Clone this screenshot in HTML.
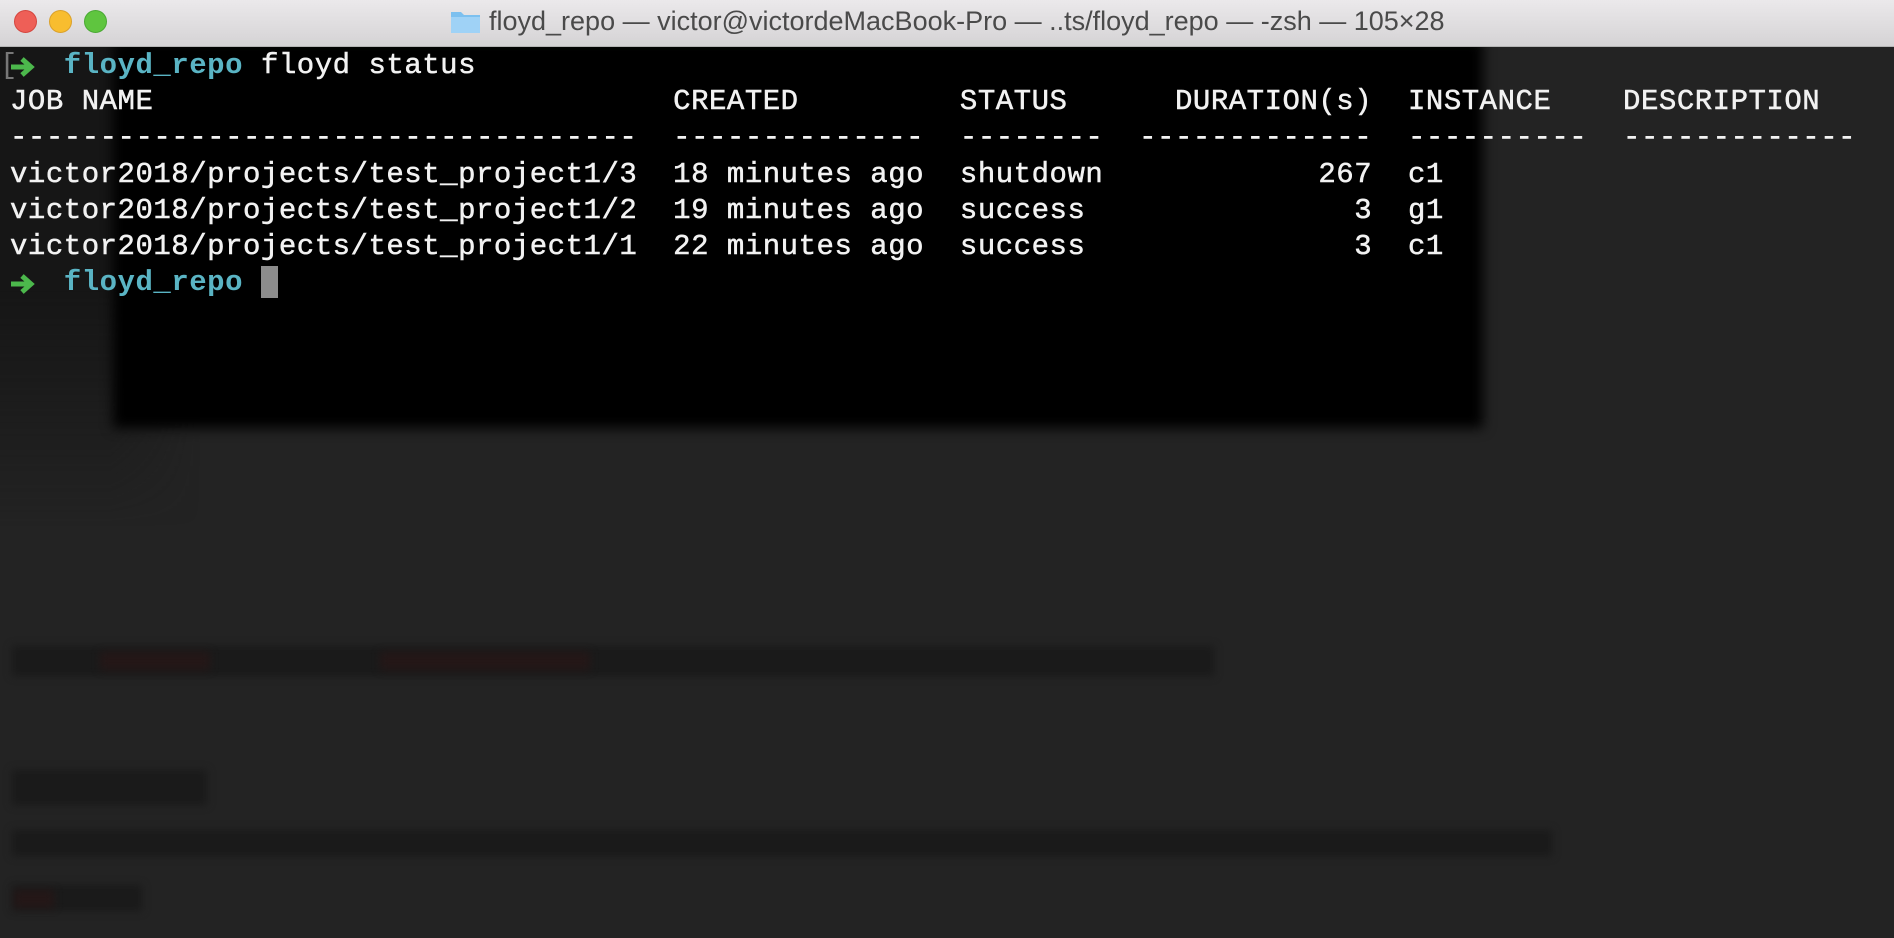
<!DOCTYPE html>
<html><head><meta charset="utf-8"><style>
html,body{margin:0;padding:0;width:1894px;height:938px;overflow:hidden;background:#232323;}
.title{position:absolute;left:0;top:0;width:1894px;height:46px;background:linear-gradient(#ebe9eb,#d5d3d5);border-bottom:1px solid #b5b5b5;}
.dot{position:absolute;top:10px;width:21px;height:21px;border-radius:50%;}
.ttext{position:absolute;left:489px;top:5px;font:27px/32px "Liberation Sans",sans-serif;color:#4a4a4a;white-space:nowrap;}
.blk{position:absolute;left:113px;top:40px;width:1370px;height:388px;background:#000;filter:blur(6px);}
.bgl{position:absolute;left:0;top:46px;width:200px;height:480px;background:linear-gradient(90deg,#161616 0,#161616 110px,rgba(35,35,35,0) 200px);-webkit-mask-image:linear-gradient(#000 50%,transparent);}
.fz{position:absolute;background:#1a1a1a;filter:blur(4px);}
.t{position:absolute;left:10px;font-family:"Liberation Mono","DejaVu Sans Mono",monospace;font-size:29px;letter-spacing:0.52px;color:#f2f2f2;white-space:pre;line-height:36px;-webkit-text-stroke:0.5px currentColor;}
.c{color:#5ab4c4;font-weight:bold;-webkit-text-stroke:0;}
</style></head><body>
<div class="bgl"></div>
<div class="blk"></div>
<div class="fz" style="left:12px;top:646px;width:1202px;height:30px;"></div>
<div class="fz" style="left:100px;top:652px;width:110px;height:18px;background:#241717"></div>
<div class="fz" style="left:380px;top:652px;width:210px;height:18px;background:#241717"></div>
<div class="fz" style="left:12px;top:770px;width:195px;height:35px;"></div>
<div class="fz" style="left:12px;top:830px;width:1540px;height:26px;"></div>
<div class="fz" style="left:12px;top:885px;width:130px;height:26px;"></div>
<div class="fz" style="left:14px;top:890px;width:40px;height:18px;background:#241717"></div>
<div class="title">
<div class="dot" style="left:14px;background:#ee5f57;border:0.5px solid #d4463f"></div>
<div class="dot" style="left:49px;background:#f8bd2f;border:0.5px solid #dba12a"></div>
<div class="dot" style="left:84px;background:#5fc53f;border:0.5px solid #4aa934"></div>
<svg style="position:absolute;left:450px;top:9px" width="31" height="25" viewBox="0 0 31 25"><path d="M1 3h10l3 3h16v18H1z" fill="#7cc0ef"/><path d="M1 8h29v16H1z" fill="#9fd2f6"/></svg>
<div class="ttext">floyd_repo — victor@victordeMacBook-Pro — ..ts/floyd_repo — -zsh — 105×28</div>
</div>
<div class="t" style="left:0;top:48px;color:#777;-webkit-text-stroke:0">[</div>
<svg style="position:absolute;left:9px;top:56px" width="28" height="22" viewBox="0 0 28 22"><path d="M2 11h20M13 3l9 8-9 8" stroke="#4cb84c" stroke-width="5" fill="none" stroke-linejoin="miter"/></svg>
<div class="t" style="top:48px">   <span class="c">floyd_repo</span> floyd status</div>
<div class="t" style="top:84px">JOB NAME                             CREATED         STATUS      DURATION(s)  INSTANCE    DESCRIPTION</div>
<div class="t" style="top:120px">-----------------------------------  --------------  --------  -------------  ----------  -------------</div>
<div class="t" style="top:157px">victor2018/projects/test_project1/3  18 minutes ago  shutdown            267  c1</div>
<div class="t" style="top:193px">victor2018/projects/test_project1/2  19 minutes ago  success               3  g1</div>
<div class="t" style="top:229px">victor2018/projects/test_project1/1  22 minutes ago  success               3  c1</div>
<svg style="position:absolute;left:9px;top:273px" width="28" height="22" viewBox="0 0 28 22"><path d="M2 11h20M13 3l9 8-9 8" stroke="#4cb84c" stroke-width="5" fill="none"/></svg>
<div class="t" style="top:265px">   <span class="c">floyd_repo</span></div>
<div style="position:absolute;left:261px;top:266px;width:17px;height:32px;background:#8c8c8c"></div>
</body></html>
